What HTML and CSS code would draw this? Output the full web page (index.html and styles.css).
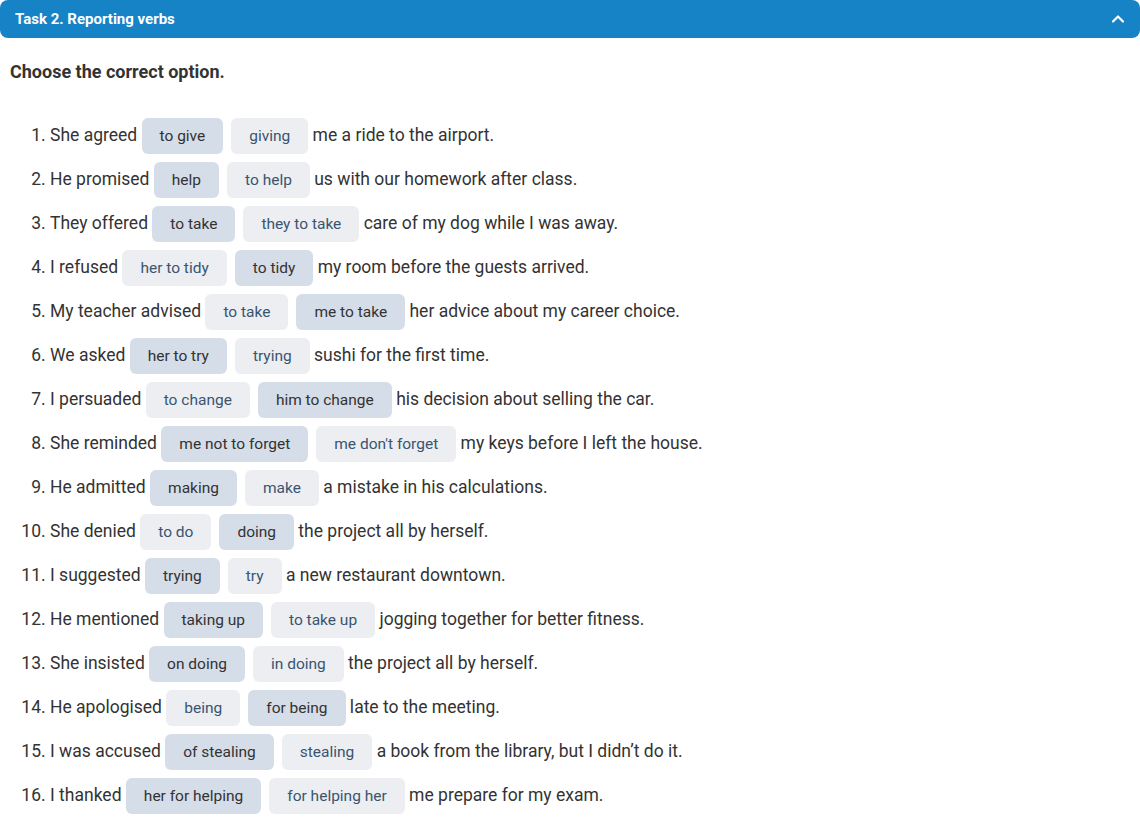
FILE: index.html
```html
<!DOCTYPE html>
<html>
<head>
<meta charset="utf-8">
<link rel="stylesheet" href="styles.css">
</head>
<body>
<div class="task">
  <div class="task-header">
    <span class="task-title">Task 2. Reporting verbs</span>
    <svg class="chev" width="14" height="10" viewBox="0 0 14 10"><path d="M2 7.5 L7 2.5 L12 7.5" fill="none" stroke="#fff" stroke-width="2.2" stroke-linecap="round" stroke-linejoin="round"/></svg>
  </div>
  <h2 class="instr">Choose the correct option.</h2>
  <ol class="items">
    <li>She agreed <span class="opt sel">to give</span><span class="opt">giving</span> me a ride to the airport.</li>
    <li>He promised <span class="opt sel">help</span><span class="opt">to help</span> us with our homework after class.</li>
    <li>They offered <span class="opt sel">to take</span><span class="opt">they to take</span> care of my dog while I was away.</li>
    <li>I refused <span class="opt">her to tidy</span><span class="opt sel">to tidy</span> my room before the guests arrived.</li>
    <li>My teacher advised <span class="opt">to take</span><span class="opt sel">me to take</span> her advice about my career choice.</li>
    <li>We asked <span class="opt sel">her to try</span><span class="opt">trying</span> sushi for the first time.</li>
    <li>I persuaded <span class="opt">to change</span><span class="opt sel">him to change</span> his decision about selling the car.</li>
    <li>She reminded <span class="opt sel">me not to forget</span><span class="opt">me don't forget</span> my keys before I left the house.</li>
    <li>He admitted <span class="opt sel">making</span><span class="opt">make</span> a mistake in his calculations.</li>
    <li>She denied <span class="opt">to do</span><span class="opt sel">doing</span> the project all by herself.</li>
    <li>I suggested <span class="opt sel">trying</span><span class="opt">try</span> a new restaurant downtown.</li>
    <li>He mentioned <span class="opt sel">taking up</span><span class="opt">to take up</span> jogging together for better fitness.</li>
    <li>She insisted <span class="opt sel">on doing</span><span class="opt">in doing</span> the project all by herself.</li>
    <li>He apologised <span class="opt">being</span><span class="opt sel">for being</span> late to the meeting.</li>
    <li>I was accused <span class="opt sel">of stealing</span><span class="opt">stealing</span> a book from the library, but I didn’t do it.</li>
    <li>I thanked <span class="opt sel">her for helping</span><span class="opt">for helping her</span> me prepare for my exam.</li>
  </ol>
</div>
</body>
</html>
```
FILE: styles.css
```css
html, body { margin: 0; padding: 0; background: #fff; }
body { font-family: Roboto, "Noto Sans", sans-serif; color: #333; }
.task-header {
  height: 38px;
  background: #1583c6;
  border-radius: 8px;
  display: flex;
  align-items: center;
  justify-content: space-between;
  padding: 0 15px;
}
.task-title { color: #fff; font-weight: 700; font-size: 15px; }
.chev { display: block; }
.instr {
  margin: 22px 0 0 10px;
  font-size: 18px;
  font-weight: 700;
  color: #333;
  line-height: 24px;
}
.items {
  margin: 29px 0 0 0;
  padding-left: 50px;
  font-size: 17.5px;
  line-height: 44px;
}
.items li { height: 44px; }
.opt {
  display: inline-block;
  height: 36px;
  line-height: 37px;
  padding: 0 18px;
  border-radius: 6px;
  font-size: 15.5px;
  background: #eceef2;
  color: #3a5570;
  vertical-align: middle;
  margin-right: 8px;
}
.opt + .opt { margin-right: 0; }
.opt.sel { background: #d5dde8; color: #333; }
```
